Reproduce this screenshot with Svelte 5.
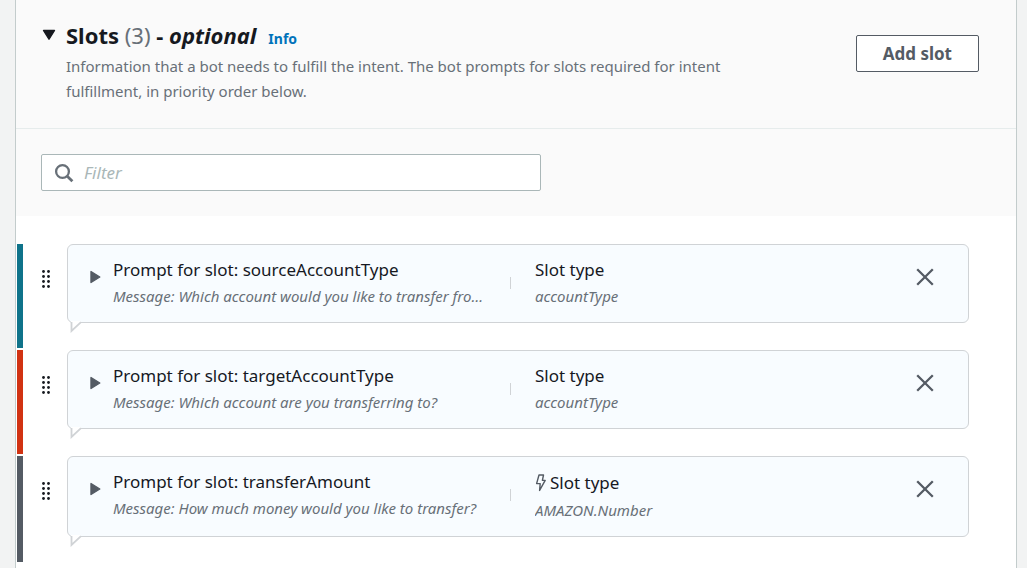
<script>
  let filter = $state('');
  let open = $state(true);
  let slots = $state([
    { name: 'sourceAccountType', message: 'Which account would you like to transfer from?', type: 'accountType', tone: 'teal', builtin: false },
    { name: 'targetAccountType', message: 'Which account are you transferring to?', type: 'accountType', tone: 'red', builtin: false },
    { name: 'transferAmount', message: 'How much money would you like to transfer?', type: 'AMAZON.Number', tone: 'slate', builtin: true }
  ]);
  const shown = $derived(slots.filter((s) => s.name.toLowerCase().includes(filter.toLowerCase())));
  function remove(name) {
    slots = slots.filter((s) => s.name !== name);
  }
</script>

<main class="page">
  <section class="panel">
    <header class="header">
      <button class="toggle" aria-label="Toggle slots" aria-expanded={open} onclick={() => (open = !open)}>
        <svg width="14" height="12" viewBox="0 0 14 12"><path d="M1.5 1.5h11L7 10.2z" fill="#16191f" stroke="#16191f" stroke-width="1.4" stroke-linejoin="round" /></svg>
      </button>
      <div class="heading">
        <div class="title-row">
          <h2>Slots <span class="count">(3)</span> - <em>optional</em></h2>
          <a href="#info">Info</a>
        </div>
        <p>Information that a bot needs to fulfill the intent. The bot prompts for slots required for intent fulfillment, in priority order below.</p>
      </div>
      <button class="add">Add slot</button>
    </header>

    <div class="filter-bar">
      <label class="filter">
        <svg width="20" height="20" viewBox="0 0 20 20" fill="none" stroke="#687078"><circle cx="8.5" cy="8.5" r="6.4" stroke-width="2.3" /><path d="M13 13l5.4 5.2" stroke-width="2.8" /></svg>
        <input type="text" placeholder="Filter" aria-label="Filter" bind:value={filter} />
      </label>
    </div>

    {#if open}
      <ul class="slots">
        {#each shown as slot (slot.name)}
          <li class="row {slot.tone}">
            <button class="grip" aria-label="Reorder {slot.name}">
              <svg width="10" height="20" viewBox="0 0 10 20" fill="#16191f">
                {#each [2.5, 7.5, 12.5, 17.5] as y}
                  <circle cx="2.5" cy={y} r="1.4" /><circle cx="7.5" cy={y} r="1.4" />
                {/each}
              </svg>
            </button>
            <div class="card">
              <button class="expand" aria-label="Expand {slot.name}">
                <svg width="12" height="14" viewBox="0 0 12 14"><path d="M1 1.5v11L9.8 7z" fill="#545b64" stroke="#545b64" stroke-width="1.4" stroke-linejoin="round" /></svg>
              </button>
              <div class="prompt">
                <div class="name">Prompt for slot: {slot.name}</div>
                <div class="detail">Message: {slot.message}</div>
              </div>
              <div class="divider"></div>
              <div class="type">
                <div class="name" class:builtin={slot.builtin}>
                  {#if slot.builtin}
                    <svg width="11" height="18" viewBox="0 0 11 18" fill="none" stroke="#545b64" stroke-width="1.4" stroke-linejoin="round"><path d="M4 1h4.5L7.4 6.4h2.8L4.6 16.4 5.2 9.6H1.6z" /></svg>
                  {/if}
                  <span>Slot type</span>
                </div>
                <div class="detail">{slot.type}</div>
              </div>
              <button class="remove" aria-label="Remove {slot.name}" onclick={() => remove(slot.name)}>
                <svg width="18" height="18" viewBox="0 0 18 18" fill="none" stroke="#545b64" stroke-width="2.3"><path d="M1.2 1.2l15.6 15.6M16.8 1.2L1.2 16.8" /></svg>
              </button>
              <svg class="tail" width="14" height="12" viewBox="0 0 14 12"><path d="M1 0v10L11 1V0z" fill="#fff" /><path d="M1.5 1v9L11 1.2" fill="none" stroke="#d0d3d6" stroke-width="1.8" /></svg>
            </div>
          </li>
        {/each}
      </ul>
    {/if}
  </section>
</main>

<style>
  :global(body) {
    margin: 0;
    background: #f2f3f3;
  }
  .page {
    padding: 0 10px 0 15px;
    font-family: 'Noto Sans', 'Open Sans', sans-serif;
    color: #16191f;
    overflow: hidden;
  }
  .page, .page * {
    box-sizing: border-box;
  }
  button {
    font-family: inherit;
    cursor: pointer;
    padding: 0;
    border: 0;
    background: none;
  }
  svg {
    display: block;
  }
  .panel {
    min-height: 100vh;
    background: #fff;
    border: solid #c3cccc;
    border-width: 0 1px;
  }
  .header {
    display: flex;
    align-items: flex-start;
    padding: 19px 37px 24px 26px;
    background: #fafafa;
    border-bottom: 1px solid #e6ecec;
  }
  .toggle {
    flex: none;
    width: 24px;
    padding-top: 10px;
  }
  .heading {
    flex: 1;
    min-width: 0;
  }
  .title-row {
    display: flex;
    align-items: baseline;
    gap: 12px;
  }
  h2 {
    margin: 0;
    font-size: 22px;
    line-height: 32px;
    font-weight: 700;
  }
  .count {
    font-weight: 400;
    color: #687078;
  }
  a {
    font-size: 14px;
    font-weight: 700;
    color: #0073bb;
    text-decoration: none;
  }
  p {
    margin: 3px 0 0;
    max-width: 670px;
    font-size: 15px;
    line-height: 25px;
    color: #687078;
  }
  .add {
    flex: none;
    margin-top: 16px;
    padding: 0 26px;
    height: 37px;
    border: 1px solid #545b64;
    border-radius: 2px;
    background: #fff;
    color: #545b64;
    font-size: 17px;
    font-weight: 700;
  }
  .filter-bar {
    padding: 25px;
    background: #fafafa;
  }
  .filter {
    display: flex;
    align-items: center;
    gap: 10px;
    max-width: 500px;
    height: 37px;
    padding: 0 12px;
    border: 1px solid #aab7b8;
    border-radius: 2px;
    background: #fff;
  }
  input {
    flex: 1;
    min-width: 0;
    padding: 0;
    border: 0;
    outline: 0;
    background: none;
    font-family: inherit;
    font-size: 17px;
  }
  input::placeholder {
    color: #aab7b8;
    font-style: italic;
    opacity: 1;
  }
  .slots {
    display: flex;
    flex-direction: column;
    gap: 2px;
    margin: 0;
    padding: 28px 47px 0 1px;
    list-style: none;
  }
  .row {
    display: flex;
    padding-bottom: 25px;
    border-left: 6px solid;
  }
  .teal { border-color: #0f738a; }
  .red { border-color: #d13212; }
  .slate { border-color: #545b64; }
  .grip {
    flex: none;
    align-self: flex-start;
    padding: 25px 17px 0 18px;
    width: 44px;
  }
  .card {
    position: relative;
    flex: 1;
    min-width: 0;
    display: flex;
    align-items: flex-start;
    padding: 12px 34px 13px 22px;
    border: 1px solid #d0d3d6;
    border-radius: 6px;
    background: #f8fcff;
  }
  .expand {
    flex: none;
    width: 23px;
    padding-top: 13px;
  }
  .prompt {
    flex: 0 1 374px;
    min-width: 0;
  }
  .name {
    font-size: 17px;
    line-height: 26px;
    white-space: nowrap;
  }
  .builtin {
    display: flex;
    align-items: center;
    gap: 4px;
    line-height: 28px;
  }
  .detail {
    overflow: hidden;
    font-size: 15px;
    line-height: 26px;
    font-style: italic;
    color: #687078;
    white-space: nowrap;
    text-overflow: ellipsis;
  }
  .divider {
    flex: none;
    width: 1px;
    height: 12px;
    margin: 20px 24px 0 23px;
    background: #d0d3d6;
  }
  .type {
    flex: 1;
    min-width: 0;
  }
  .remove {
    flex: none;
    padding-top: 11px;
  }
  .tail {
    position: absolute;
    left: 2px;
    bottom: -11px;
  }
</style>
